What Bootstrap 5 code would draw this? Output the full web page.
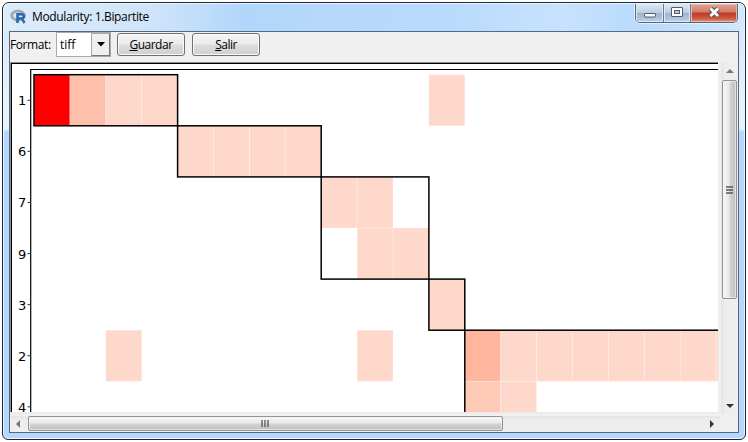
<!DOCTYPE html>
<html lang="es">
<head>
<meta charset="utf-8">
<title>Modularity: 1.Bipartite</title>
<link href="https://cdn.jsdelivr.net/npm/bootstrap@5.3.0/dist/css/bootstrap.min.css" rel="stylesheet">
<style>
body{width:748px;height:442px;overflow:hidden;background:#fff;padding:2px;font:12px "Open Sans","Noto Sans",sans-serif;color:#000;line-height:16px}
.win{width:744px;height:438px;border:1px solid #1d2837;border-radius:7px 7px 6px 6px;background:linear-gradient(#cfe6fd 0,#ddecfb 55px,#e6f2fd 100px,#e6f2fd 126px,#b4d7fb 129px,#b4d7fb);box-shadow:inset 0 0 0 1px #eef7ff;padding:0 6px 6px}
.titlebar{height:28px;margin:0 -5px;padding-left:6px;background:linear-gradient(90deg,#dcecfb 0,#cfe4fa 150px,#b2d6fb 240px,#b9dafc 440px,#c7e2fe 560px,#b8dafc 640px,#d2e8fd);border-radius:6px 6px 0 0;border-top:1px solid #eef7ff}
.caption{font-size:12px;letter-spacing:-.35px;margin-left:5px;padding-top:5px;white-space:nowrap}
.controls{height:19px;margin-right:6px;border:1px solid #53677f;border-top:0;border-radius:0 0 5px 5px;overflow:hidden;box-shadow:0 0 0 1px #e3f1ff}
.ctl{height:18px;background:linear-gradient(#dde8f4 0,#bacde2 48%,#9bb2cc 50%,#bdd1e7);border-right:1px solid #667a93;box-shadow:inset 0 0 0 1px #e0ebf6}
.ctl.close-ctl{border:0;background:linear-gradient(#e3a494 0,#d37b67 45%,#bc3825 50%,#cb5a40 80%,#e79778);box-shadow:inset 0 0 0 1px #eab8a8}
.client{width:730px;height:402px;border:1px solid #56677e;background:#f0f0f0}
.toolbar{height:30px}
.toolbar label{width:46px;letter-spacing:-.4px;padding-top:5px}
.combo{width:55px;height:25px;border:1px solid #aaa;background:#fff}
.arrow-btn{width:19px;height:23px;background:#f0f0f0;border:1px solid #777;border-left-color:#aaa;border-top-color:#aaa}
.tool{width:68px;height:23px;padding:0;border:1px solid #707070;border-radius:3px;font-size:12px;letter-spacing:-.5px;line-height:21px;color:#000;background:linear-gradient(#f3f3f3,#ebebeb 49%,#ddd 51%,#cfcfcf);box-shadow:inset 0 0 0 1px #fafafa}
.plot{width:708px;height:350px}
.plot svg text{font:13px "DejaVu Sans",Verdana,sans-serif}
.vbar{width:16px;height:352px;margin-left:3px;background:linear-gradient(90deg,#e4e4e4,#ededed 4px,#efefef)}
.hbar{width:710px;height:16px;background:linear-gradient(#e4e4e4,#ededed 4px,#efefef)}
.vgap{height:18px}
.vthumb{width:15px;height:219px;margin-left:1px;border:1px solid #929292;border-radius:2px;background:linear-gradient(90deg,#f6f6f6 0,#e9e9e9 45%,#d4d4d6 55%,#bdbdc0);box-shadow:inset 0 0 0 1px #f5f5f5aa}
.hthumb{width:475px;height:15px;border:1px solid #929292;border-radius:2px;background:linear-gradient(#f6f6f6 0,#e9e9e9 45%,#d4d4d6 55%,#bdbdc0);box-shadow:inset 0 0 0 1px #f5f5f5aa}
svg{display:block;flex:none}
</style>
<script src="https://cdn.jsdelivr.net/npm/bootstrap@5.3.0/dist/js/bootstrap.bundle.min.js"></script>
</head>
<body>
<div class="win">
  <div class="titlebar d-flex align-items-start">
    <svg width="17" height="16" viewBox="0 0 17 16" style="margin-top:5px">
      <ellipse cx="8" cy="6.500" rx="6.300" ry="4.400" fill="none" stroke="#a4a9b0" stroke-width="3"/>
      <path d="M7.500 14V5.200h3.700c3.600 0 3.600 4.300.3 4.400 1 .3 2 2.700 3 4.400M7.500 9.600h4" fill="none" stroke="#2866b4" stroke-width="2.500"/>
    </svg>
    <span class="caption">Modularity: 1.Bipartite</span>
    <div class="controls d-flex ms-auto">
      <div class="ctl" style="width:28px"><svg width="27" height="18"><rect x="8.500" y="9.500" width="11" height="3.500" rx=".5" fill="#fff" stroke="#505b70"/></svg></div>
      <div class="ctl" style="width:27px"><svg width="26" height="18"><rect x="7.500" y="3.500" width="11" height="9" rx=".5" fill="#fff" stroke="#505b70"/><rect x="10.500" y="6.500" width="5" height="3" fill="#b4c8de" stroke="#505b70"/></svg></div>
      <div class="ctl close-ctl" style="width:46px"><svg width="46" height="18"><path d="M19.500 4.500l7.500 7.500M27 4.500l-7.500 7.500" stroke="#59525f" stroke-width="5"/><path d="M19.500 4.500l7.500 7.500M27 4.500l-7.500 7.500" stroke="#fff" stroke-width="2.900"/></svg></div>
    </div>
  </div>
  <div class="client">
    <div class="toolbar d-flex align-items-start">
      <label class="text-nowrap">Format:</label>
      <div class="combo d-flex"><span class="flex-fill" style="padding:4px 0 0 3px">tiff</span>
        <div class="arrow-btn d-flex align-items-center justify-content-center"><svg width="8" height="5"><path d="M0 0h8L4 4.500z"/></svg></div>
      </div>
      <button class="btn tool" style="margin:1px 0 0 6px"><u>G</u>uardar</button>
      <button class="btn tool" style="margin:1px 0 0 7px"><u>S</u>alir</button>
    </div>
    <div class="d-flex">
      <div class="plot">
        <svg id="plot" width="709" height="352" viewBox="10 62 709 352">
          <rect x="10" y="62" width="709" height="352" fill="#ececec"/>
          <rect x="10" y="62" width="708" height="350" fill="#8c8c8c"/>
          <rect x="11" y="63" width="707" height="349"/>
          <rect x="12" y="64" width="706" height="348" fill="#fff"/>
          <svg x="12" y="64" width="706" height="348" viewBox="12 64 706 348">
            <g id="cells"></g>
            <path d="M30.700 412V69.500H718" fill="none" stroke="#000" stroke-width="1.200"/>
            <g id="modules" fill="none" stroke="#000" stroke-width="1.500"></g>
            <g id="labels"></g>
          </svg>
        </svg>
      </div>
      <div class="vbar">
        <div class="vgap"><svg width="16" height="18"><path d="M5 11h8L9 7z" fill="#777"/></svg></div>
        <div class="vthumb d-flex align-items-center justify-content-center"><svg width="7" height="8"><path d="M0 1h7M0 4h7M0 7h7" stroke="#555" stroke-width="1.300"/></svg></div>
        <svg width="16" height="115"><path d="M5 105h8l-4 4z" fill="#333"/></svg>
      </div>
    </div>
    <div class="hbar d-flex" style="margin-top:2px">
      <svg width="18" height="16"><path d="M10 4v8L6 8z" fill="#777"/></svg>
      <div class="hthumb d-flex align-items-center justify-content-center"><svg width="8" height="7" style="margin-right:2px"><path d="M1 0v7M4 0v7M7 0v7" stroke="#555" stroke-width="1.300"/></svg></div>
      <svg class="ms-auto" width="18" height="16"><path d="M8 4v8l4-4z" fill="#333"/></svg>
    </div>
  </div>
</div>
<script>
const X=34, Y=74.7, W=35.9, H=51.1;
const el=(parent,name,attrs,text)=>{
  const n=document.createElementNS('http://www.w3.org/2000/svg',name);
  for(const k in attrs)n.setAttribute(k,attrs[k]);
  if(text)n.textContent=text;
  document.getElementById(parent).append(n);
};
const light='#ffd8cc';
// [column, row, fill]
const cells=[[0,0,'#f00'],[1,0,'#ffc0ab'],[2,0],[3,0],[11,0],[4,1],[5,1],[6,1],[7,1],[8,2],[9,2],[9,3],[10,3],[11,4],
 [2,5],[9,5],[12,5,'#ffb59e'],[13,5],[14,5],[15,5],[16,5],[17,5],[18,5],[19,5],[12,6,'#ffc9b8'],[13,6]];
for(const [c,r,f] of cells)el('cells','rect',{x:X+c*W,y:Y+r*H,width:W,height:H,fill:f||light,stroke:'#fff','stroke-opacity':.3,'stroke-width':.8});
// [column, row, columns, rows]
for(const [c,r,w,h] of [[0,0,4,1],[4,1,4,1],[8,2,3,2],[11,4,1,1],[12,5,10,4]])
  el('modules','rect',{x:X+c*W,y:Y+r*H,width:w*W,height:h*H});
['1','6','7','9','3','2','4'].forEach((t,i)=>{
  const y=Y+(i+.5)*H;
  el('labels','text',{x:18,y:y+5},t);
  el('labels','path',{d:`M27.500 ${y}H31`,stroke:'#333'});
});
</script>
</body>
</html>
